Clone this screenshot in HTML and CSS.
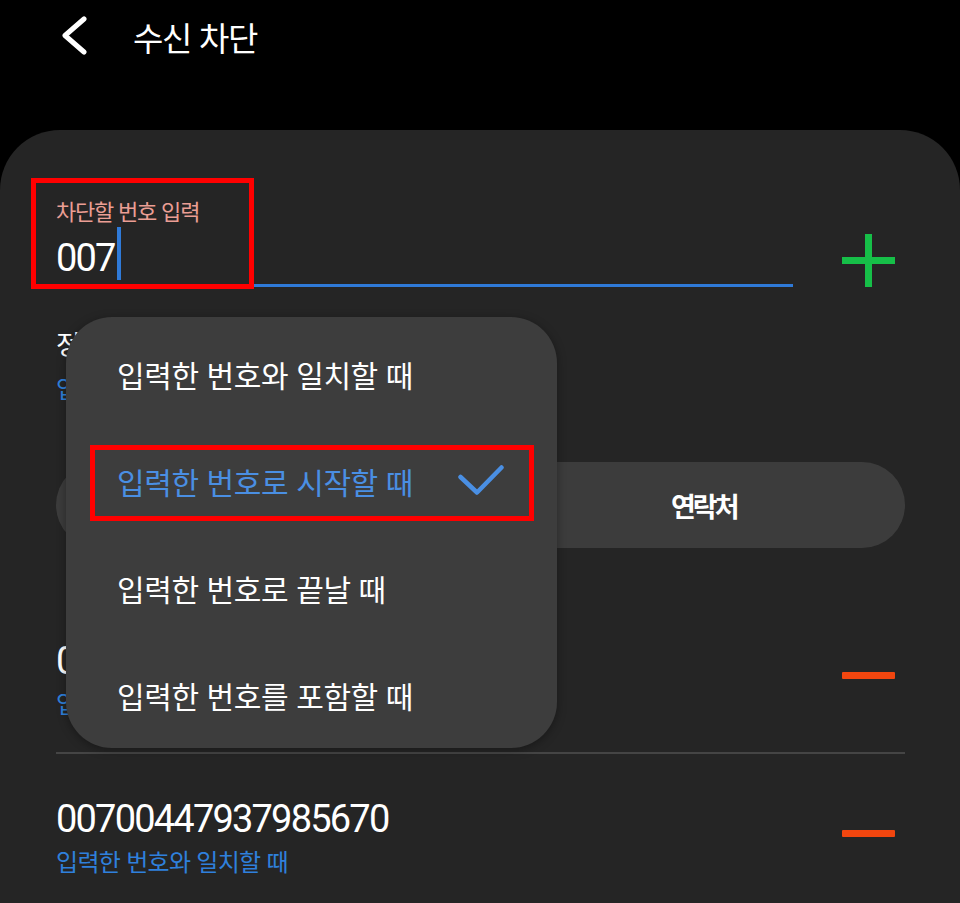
FILE: index.html
```html
<!DOCTYPE html>
<html lang="ko">
<head>
<meta charset="utf-8">
<title>수신 차단</title>
<link rel="stylesheet" href="styles.css">
</head>
<body>
<div class="screen">
  <header class="topbar">
    <svg class="back" viewBox="0 0 28 40" width="28" height="40"><polyline points="24,4 5,20.5 24,37" fill="none" stroke="#fff" stroke-width="5" stroke-linecap="round" stroke-linejoin="round"/></svg>
    <h1 class="title">수신 차단</h1>
  </header>

  <main class="card">
    <div class="field-row">
      <div class="field">
        <div class="field-label">차단할 번호 입력</div>
        <div class="field-value"><span class="digits">007</span><span class="cursor"></span></div>
      </div>
      <svg class="plus" viewBox="0 0 53 53" width="53" height="53"><path d="M26.5 0V53M0 26.5H53" stroke="#16bf48" stroke-width="7"/></svg>
    </div>

    <div class="row row-a">
      <div class="row-text">
        <div class="row-title">정확한 번호</div>
        <div class="row-sub">입력한 번호</div>
      </div>
    </div>

    <div class="segment">
      <div class="seg seg-left">통화 기록</div>
      <div class="seg seg-right">연락처</div>
    </div>

    <div class="row row-1">
      <div class="row-text">
        <div class="row-num">0070012345</div>
        <div class="row-sub">입력한 번호</div>
      </div>
      <span class="minus"></span>
    </div>

    <div class="divider"></div>

    <div class="row row-2">
      <div class="row-text">
        <div class="row-num">00700447937985670</div>
        <div class="row-sub">입력한 번호와 일치할 때</div>
      </div>
      <span class="minus"></span>
    </div>
  </main>

  <div class="menu">
    <div class="menu-item">입력한 번호와 일치할 때</div>
    <div class="menu-item is-selected">입력한 번호로 시작할 때
      <svg class="check" viewBox="0 0 46 32" width="46" height="32"><polyline points="2.5,12 19,27.5 43.5,2.5" fill="none" stroke="#4a8fe3" stroke-width="4.5" stroke-linecap="round" stroke-linejoin="round"/></svg>
    </div>
    <div class="menu-item">입력한 번호로 끝날 때</div>
    <div class="menu-item">입력한 번호를 포함할 때</div>
  </div>

  <div class="mark mark-field"></div>
  <div class="mark mark-item"></div>
</div>
</body>
</html>
```

FILE: styles.css
```css
* { box-sizing: border-box; }

html, body {
  margin: 0;
  padding: 0;
  background: #000;
}

body {
  font-family: "Noto Sans CJK KR", "Noto Sans", sans-serif;
  color: #fff;
}

.screen {
  position: relative;
  width: 960px;
  height: 903px;
  overflow: hidden;
  background: #000;
}

/* header */
.topbar {
  height: 130px;
  display: flex;
  align-items: flex-start;
  padding: 15px 0 0 60px;
}

.back {
  display: block;
  flex: none;
}

.title {
  margin: 2px 0 0 45px;
  font-size: 33px;
  line-height: 40px;
  font-weight: 400;
  letter-spacing: -1.3px;
  color: #fff;
}

/* card */
.card {
  background: #252525;
  border-radius: 60px 60px 0 0;
  height: 773px;
  padding: 65px 55px 0 56px;
}

.field-row {
  display: flex;
  align-items: flex-end;
}

.field {
  flex: 0 0 737px;
  border-bottom: 3px solid #2f7ad8;
}

.field-label {
  font-size: 22px;
  line-height: 30px;
  letter-spacing: -1.2px;
  color: #eb9e94;
}

.field-value {
  display: flex;
  align-items: flex-end;
  height: 53px;
  margin-top: 2px;
  margin-bottom: 4px;
}

.digits {
  font-family: Roboto, "Liberation Sans", sans-serif;
  font-size: 38px;
  line-height: 38px;
  letter-spacing: -1.8px;
  margin-bottom: 3px;
  color: #fff;
}

.cursor {
  width: 4px;
  height: 53px;
  margin-left: 2px;
  background: #2f7ad8;
}

.plus {
  display: block;
  flex: none;
  margin-left: 49px;
}

/* rows */
.row {
  display: flex;
  align-items: center;
  justify-content: space-between;
}

.row-a {
  padding-top: 40px;
  height: 175px;
  align-items: flex-start;
}

.row-title {
  font-size: 27px;
  line-height: 34px;
  letter-spacing: -1.5px;
  color: #fff;
}

.row-sub {
  font-size: 24px;
  line-height: 30px;
  letter-spacing: -0.7px;
  color: #2f80dc;
}

.row-a .row-sub {
  margin-top: 12px;
}

.row-num {
  font-family: Roboto, "Liberation Sans", sans-serif;
  font-size: 38px;
  line-height: 44px;
  letter-spacing: -1.8px;
  color: #fff;
}

.row-num + .row-sub {
  margin-top: 5px;
}

.row-1 {
  padding: 91px 10px 34px 0;
}

.row-2 {
  padding: 43px 10px 0 0;
}

.minus {
  display: block;
  width: 53px;
  height: 7px;
  margin-bottom: 6px;
  border-radius: 1px;
  background: #f2460f;
}

.divider {
  height: 2px;
  background: #454545;
}

/* segmented control */
.segment {
  display: grid;
  grid-template-columns: 1fr 1fr;
  height: 86px;
  border-radius: 43px;
  background: #3c3c3c;
}

.seg {
  display: flex;
  align-items: center;
  justify-content: center;
  font-size: 27px;
  font-weight: 700;
  letter-spacing: -3px;
  color: #fff;
}

.seg-right {
  padding-left: 22px;
}

/* popup menu (overlay) */
.menu {
  position: absolute;
  left: 66px;
  top: 317px;
  width: 491px;
  padding-top: 3px;
  border-radius: 46px;
  background: #3d3d3d;
  box-shadow: 0 2px 10px rgba(0, 0, 0, 0.35);
}

.menu-item {
  display: flex;
  align-items: center;
  justify-content: space-between;
  height: 107px;
  padding: 0 53px 0 51px;
  font-size: 30px;
  letter-spacing: -0.4px;
  color: #fff;
}

.menu-item.is-selected {
  color: #4a8fe3;
}

.check {
  display: block;
  flex: none;
}

/* red annotation boxes */
.mark {
  position: absolute;
  border: 5px solid #ff0000;
}

.mark-field {
  left: 31px;
  top: 178px;
  width: 223px;
  height: 111px;
}

.mark-item {
  left: 90px;
  top: 445px;
  width: 444px;
  height: 76px;
}
```
